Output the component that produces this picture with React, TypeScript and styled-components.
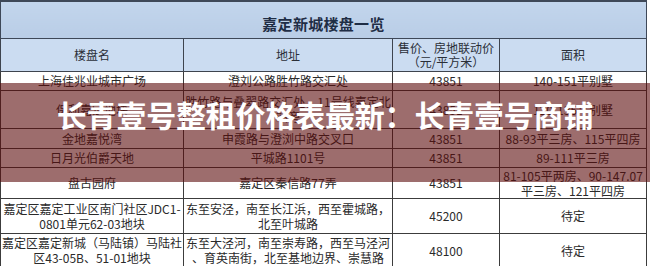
import { createGlobalStyle, styled } from "styled-components";

const GlobalStyle = createGlobalStyle`
  html, body {
    margin: 0;
    padding: 0;
    background: #ffffff;
  }
  body {
    font-family: "Noto Sans CJK SC", "Noto Sans", sans-serif;
  }
`;

const Wrapper = styled.div`
  position: relative;
  width: 650px;
  height: 266px;
  overflow: hidden;
  background: #ffffff;
`;

const Table = styled.table`
  width: 646px;
  border-collapse: collapse;
  table-layout: fixed;
  font-size: 12px;
  line-height: 15px;
  color: #2a2a2a;
  text-align: center;
`;

const Row = styled.tr<{ h: number }>`
  height: ${(props) => props.h}px;
`;

const Caption = styled.td`
  height: 37px;
  padding: 8px 0 0;
  box-sizing: border-box;
  border: 1px solid #3e4858;
  border-top-width: 2px;
  background: linear-gradient(#c2d5ec, #b9cde6);
  font-size: 15px;
  line-height: 20px;
  font-weight: 700;
  color: #1f2d45;
  letter-spacing: 0.3px;
`;

const Head = styled.th`
  padding: 0;
  border: 1px solid #3e444e;
  background: #cbdcf1;
  font-weight: 400;
  color: #2a2f38;
  font-size: 12px;
  line-height: 14px;
`;

// loose: 允许在"、"前换行（原图就是这么断的）
const Cell = styled.td<{ $loose?: boolean }>`
  padding: 0;
  border: 1px solid #3c3c3c;
  vertical-align: middle;
  line-break: ${(props) => (props.$loose ? "anywhere" : "auto")};
`;

const Band = styled.div`
  position: absolute;
  left: 0;
  top: 83px;
  width: 650px;
  height: 99px;
  background: rgba(92, 12, 12, 0.6);
  display: flex;
  justify-content: center;
  padding-top: 12px;
  box-sizing: border-box;
`;

const BandTitle = styled.h1`
  margin: 0;
  color: #ffffff;
  font-size: 30px;
  line-height: 38px;
  font-weight: 700;
  font-family: "Noto Sans CJK SC", "Noto Sans", sans-serif;
  letter-spacing: -0.2px;
`;

interface IRow {
  h: number;
  name: string;
  addr: string;
  price: string;
  area: string;
  loose?: boolean;
}

const rows: IRow[] = [
  { h: 19, name: "上海佳兆业城市广场", addr: "澄刘公路胜竹路交汇处", price: "43851", area: "140-151平别墅" },
  {
    h: 38,
    name: "保利嘉定地块",
    addr: "胜竹路与叠翠路交汇处，11号线嘉定北站旁",
    price: "43851",
    area: "120-135平别墅",
  },
  { h: 20, name: "金地嘉悦湾", addr: "申霞路与澄浏中路交叉口", price: "43851", area: "88-93平三房、115平四房" },
  { h: 19, name: "日月光伯爵天地", addr: "平城路1101号", price: "43851", area: "89-111平三房" },
  {
    h: 31,
    name: "盘古园府",
    addr: "嘉定区秦信路77弄",
    price: "43851",
    area: "81-105平两房、90-147.07平三房、121平四房",
  },
  {
    h: 35,
    name: "嘉定区嘉定工业区南门社区JDC1-0801单元62-03地块",
    addr: "东至安泾，南至长江浜，西至霍城路，北至叶城路",
    price: "45200",
    area: "待定",
  },
  {
    h: 34,
    name: "嘉定区嘉定新城（马陆镇）马陆社区43-05B、51-01地块",
    addr: "东至大泾河，南至崇寿路，西至马泾河、育英南街，北至基地边界、崇慧路",
    price: "48100",
    area: "待定",
    loose: true,
  },
];

export default function App() {
  return (
    <Wrapper>
      <GlobalStyle />
      <Table>
        <colgroup>
          <col style={{ width: 183 }} />
          <col style={{ width: 209 }} />
          <col style={{ width: 107 }} />
          <col style={{ width: 147 }} />
        </colgroup>
        <tbody>
          <tr>
            <Caption colSpan={4}>嘉定新城楼盘一览</Caption>
          </tr>
          <Row h={33}>
            <Head>楼盘名</Head>
            <Head>地址</Head>
            <Head>
              售价、房地联动价
              <br />
              （元/平方米）
            </Head>
            <Head>面积</Head>
          </Row>
          {rows.map((r) => (
            <Row h={r.h} key={r.name}>
              <Cell>{r.name}</Cell>
              <Cell $loose={r.loose}>{r.addr}</Cell>
              <Cell>{r.price}</Cell>
              <Cell>{r.area}</Cell>
            </Row>
          ))}
        </tbody>
      </Table>
      <Band>
        <BandTitle>长青壹号整租价格表最新：长青壹号商铺</BandTitle>
      </Band>
    </Wrapper>
  );
}
